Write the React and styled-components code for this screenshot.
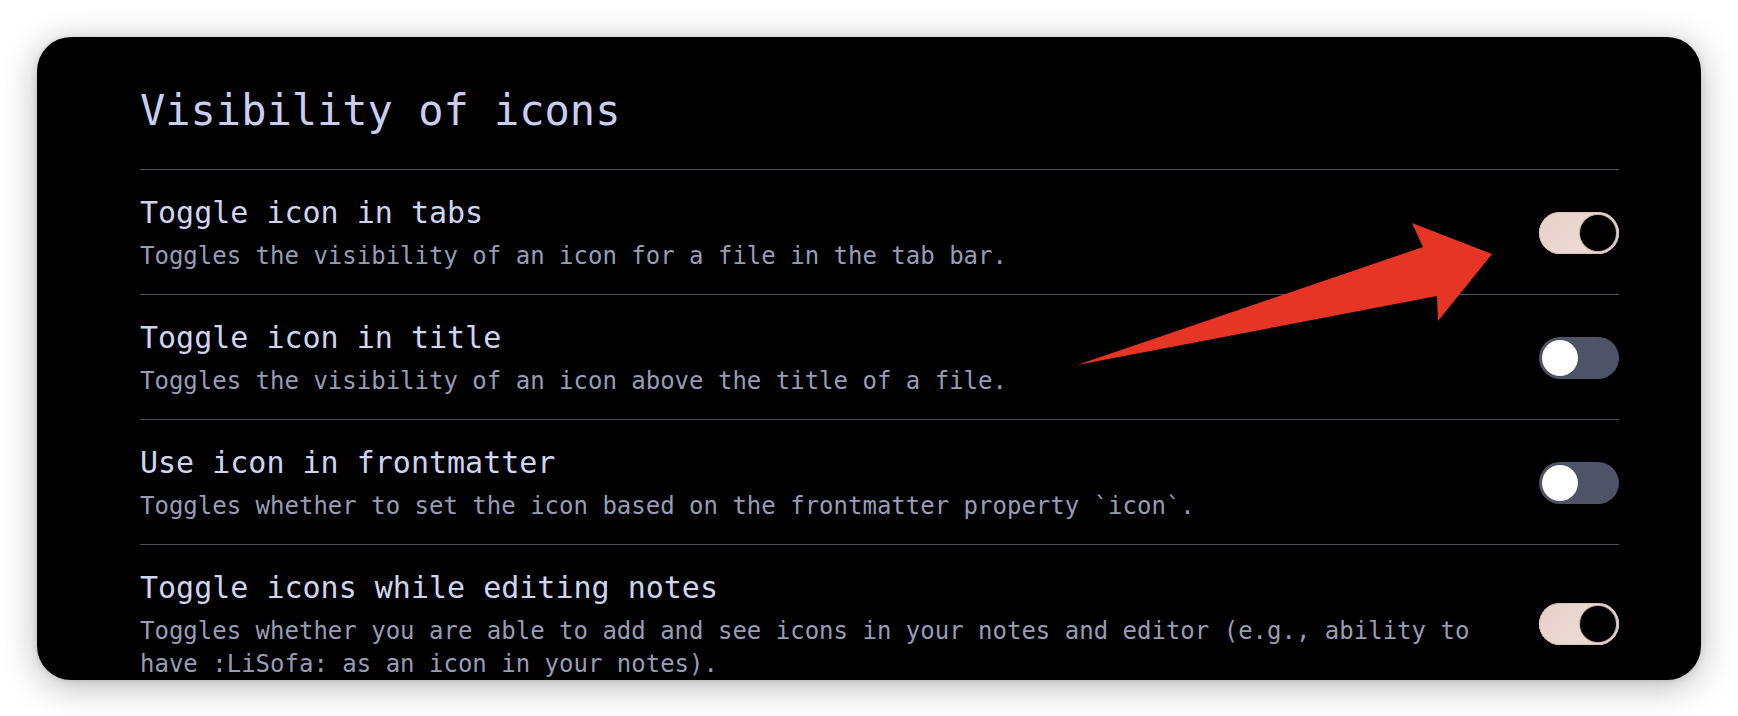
import React from "react";
import styled, { createGlobalStyle } from "styled-components";

const Global = createGlobalStyle`
  html, body { margin: 0; padding: 0; background: #ffffff; }
  body { font-family: "DejaVu Sans Mono", "Liberation Mono", monospace; }
`;

const Page = styled.div`
  padding: 37px;
  box-sizing: border-box;
  width: 1738px;
  height: 716px;
  overflow: hidden;
`;

const Card = styled.section`
  position: relative;
  height: 643px;
  box-sizing: border-box;
  background: #000000;
  border-radius: 34px;
  box-shadow: 0 6px 36px rgba(0, 0, 0, 0.28), 0 1px 6px rgba(0, 0, 0, 0.12);
  overflow: hidden;
  padding: 49px 82px 0 103px;
`;

const Heading = styled.h2`
  margin: 0 0 33px;
  font-size: 42px;
  line-height: 50px;
  font-weight: 400;
  color: #c8cdf1;
  letter-spacing: 0;
`;

const List = styled.div`
  display: flex;
  flex-direction: column;
`;

const Row = styled.div`
  display: flex;
  align-items: center;
  gap: 40px;
  border-top: 1px solid #4c4e61;
  padding: 22px 0 21px;
`;

const Info = styled.div`
  flex: 1;
  min-width: 0;
  display: flex;
  flex-direction: column;
  gap: 6px;
`;

const Title = styled.div`
  font-size: 30px;
  line-height: 42px;
  color: #cfd5f1;
`;

const Desc = styled.div`
  font-size: 24px;
  line-height: 33px;
  color: #979cb7;
`;

const Track = styled.button`
  flex: none;
  position: relative;
  width: 80px;
  height: 42px;
  border: none;
  padding: 0;
  border-radius: 21px;
  cursor: pointer;
  background: ${(p) =>
    p.$on
      ? "linear-gradient(135deg, #e6d1ca 0%, #ecd9d3 60%, #e6d2cb 100%)"
      : "#4f5368"};
  box-shadow: ${(p) => (p.$on ? "inset 0 0 0 1px #d7c1ba" : "none")};
`;

const Knob = styled.span`
  position: absolute;
  top: 3px;
  left: ${(p) => (p.$on ? "41px" : "3px")};
  width: 36px;
  height: 36px;
  border-radius: 50%;
  background: ${(p) => (p.$on ? "#000000" : "#ffffff")};
  box-shadow: ${(p) => (p.$on ? "0 0 0 1px #bfa9a2" : "0 0 1px rgba(0,0,0,0.4)")};
`;

const ArrowSvg = styled.svg`
  position: absolute;
  left: 1003px;
  top: 173px;
  width: 470px;
  height: 170px;
  pointer-events: none;
`;

const settings = [
  {
    title: "Toggle icon in tabs",
    desc: "Toggles the visibility of an icon for a file in the tab bar.",
    on: true,
  },
  {
    title: "Toggle icon in title",
    desc: "Toggles the visibility of an icon above the title of a file.",
    on: false,
  },
  {
    title: "Use icon in frontmatter",
    desc: "Toggles whether to set the icon based on the frontmatter property `icon`.",
    on: false,
  },
  {
    title: "Toggle icons while editing notes",
    desc: "Toggles whether you are able to add and see icons in your notes and editor (e.g., ability to have :LiSofa: as an icon in your notes).",
    on: true,
  },
];

function Toggle({ on }) {
  return (
    <Track $on={on} aria-pressed={on}>
      <Knob $on={on} />
    </Track>
  );
}

export default function App() {
  return (
    <>
      <Global />
      <Page>
        <Card>
          <Heading>Visibility of icons</Heading>
          <List>
            {settings.map((s) => (
              <Row key={s.title}>
                <Info>
                  <Title>{s.title}</Title>
                  <Desc>{s.desc}</Desc>
                </Info>
                <Toggle on={s.on} />
              </Row>
            ))}
          </List>
          <ArrowSvg viewBox="0 0 470 170">
            <polygon
              points="37,155 383,37 372,13 452,44 398,111 397,86"
              fill="#e63425"
            />
          </ArrowSvg>
        </Card>
      </Page>
    </>
  );
}
